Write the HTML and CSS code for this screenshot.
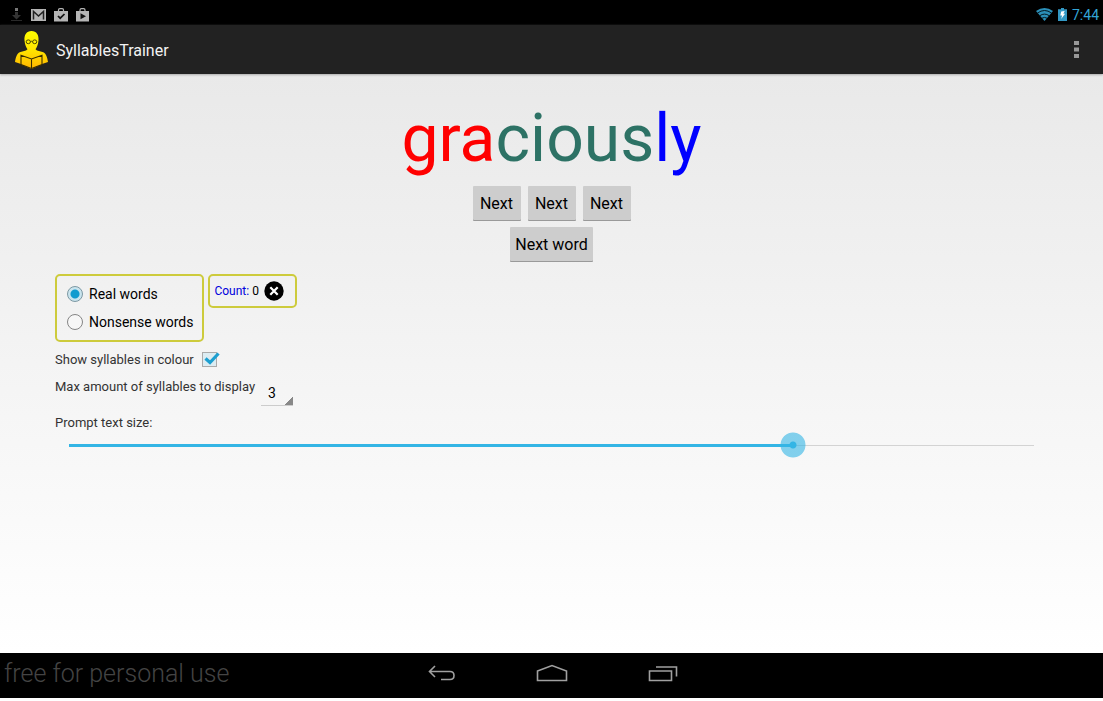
FILE: index.html
```html
<!DOCTYPE html>
<html lang="en">
<head>
<meta charset="utf-8">
<meta name="viewport" content="width=device-width, initial-scale=1">
<title>SyllablesTrainer</title>
<link rel="stylesheet" href="styles.css">
</head>
<body>
<div class="status-bar">
  <div class="notifications">
    <svg width="12" height="14" viewBox="0 0 12 14"><path d="M4 0h3v3H4z" fill="#777"/><path d="M4 4h3v3h3l-4.500 4.500L1 7h3z" fill="#333"/><path d="M0 12h11v1H0z" fill="#292929"/></svg>
    <svg width="15" height="12" viewBox="0 0 15 12"><path d="M0 0h15v12H0z" fill="#b5b5b5"/><path d="M2.500 10.500V2.500l5 4.500 5-4.500v8" fill="none" stroke="#222" stroke-width="1.500"/></svg>
    <svg width="14" height="14" viewBox="0 0 14 14"><path d="M0 3h14v10.500H0z" fill="#b5b5b5"/><path d="M4.500 3V2q0-1.400 1.400-1.400h2.200q1.400 0 1.400 1.400v1" fill="none" stroke="#b5b5b5" stroke-width="1.200"/><path d="M4 8l2.200 2.200L10.500 6" fill="none" stroke="#111" stroke-width="1.700"/></svg>
    <svg width="14" height="14" viewBox="0 0 14 14"><path d="M0 3h13v10.500H0z" fill="#b5b5b5"/><path d="M4 3V2q0-1.400 1.400-1.400h2.200Q9 .6 9 2v1" fill="none" stroke="#b5b5b5" stroke-width="1.200"/><path d="M4.500 5.200L10 8.300l-5.500 3z" fill="#111"/></svg>
  </div>
  <div class="system">
    <svg class="wifi" width="17" height="13" viewBox="0 0 17 13"><path d="M0 3Q8.500-3 17 3L8.500 13z" fill="#2b8fb8"/><path d="M1.500 5Q8.500 0 15.500 5M3.800 7.700q4.700-3.200 9.400 0M6 10.200q2.500-1.600 5 0" fill="none" stroke="#031820" stroke-width="1"/></svg>
    <svg class="battery" width="9" height="13" viewBox="0 0 9 13"><path d="M3 0h3v1.200h3V13H0V1.200h3z" fill="#3398c4"/><path d="M3.200 3.500L6.700 3 5.400 5.800h1.700L3.200 11l.9-3.600H2.300z" fill="#fff"/></svg>
    <time>7:44</time>
  </div>
</div>

<header class="action-bar">
  <svg class="app-icon" width="33" height="38" viewBox="0 0 33 38">
    <defs><linearGradient id="gold" x1="0" y1="0" x2="0" y2="38" gradientUnits="userSpaceOnUse"><stop offset="0" stop-color="#ffff00"/><stop offset=".5" stop-color="#ffe500"/><stop offset="1" stop-color="#ffb400"/></linearGradient></defs>
    <path d="M16.500 0C21.500 0 24 4 23.500 9.500 23.200 14 21.500 17 20.500 18.200L22 19.500l5.500 1.500C31.500 22 32.500 28 33 31l-6 2v.5L16.500 38 6 33.500V33l-6-2c.5-3 1.500-9 5.500-10l5.500-1.500 1.500-1.300C11.500 17 9.800 14 9.500 9.500 9 4 11.500 0 16.500 0z" fill="url(#gold)"/>
    <path d="M6 24.200l10.500 3.800L27 24.200v9.300L16.500 37.500 6 33.500zM16.500 28v10" fill="none" stroke="#382c00" stroke-width="1.100"/>
    <g fill="none" stroke="#4a4500"><ellipse cx="13.300" cy="10.800" rx="2.100" ry="1.900"/><ellipse cx="19.700" cy="10.800" rx="2.100" ry="1.900"/><path d="M15.400 10.600q1.100-.7 2.200 0"/></g>
  </svg>
  <h1 class="app-title">SyllablesTrainer</h1>
  <button class="overflow" type="button" aria-label="More options">
    <svg width="5" height="18" viewBox="0 0 5 18"><path d="M0 0h5v4H0zM0 6.500h5v4H0zM0 13h5v4H0z" fill="#999"/></svg>
  </button>
</header>

<main class="content">
  <p class="prompt"><span class="first">gra</span><span class="second">cious</span><span class="third">ly</span></p>
  <div class="actions">
    <div class="button-row">
      <button class="btn" type="button">Next</button>
      <button class="btn" type="button">Next</button>
      <button class="btn" type="button">Next</button>
    </div>
    <button class="btn btn-word" type="button">Next word</button>
  </div>

  <div class="panels">
    <div class="panel word-type" role="radiogroup" aria-label="Word type">
      <label class="option"><input class="radio" type="radio" name="type" checked>Real words</label>
      <label class="option"><input class="radio" type="radio" name="type">Nonsense words</label>
    </div>
    <div class="panel counter">
      <span><span class="count-label">Count:</span> 0</span>
      <button class="reset" type="button" aria-label="Reset count">
        <svg width="20" height="20" viewBox="0 0 20 20"><circle cx="10" cy="10" r="9.700" fill="#000"/><path d="M6.300 6.300l7.400 7.400M13.700 6.300l-7.400 7.400" stroke="#fff" stroke-width="2.200"/></svg>
      </button>
    </div>
  </div>

  <div class="setting colour-setting">
    <label for="colour">Show syllables in colour</label>
    <span class="check-wrap"><input class="check" type="checkbox" id="colour" checked><svg class="tick" width="18" height="14" viewBox="0 0 18 14"><path d="M2.500 6.500l4.500 4L15.500 1.500" fill="none" stroke="#1c9fd0" stroke-width="3.200"/></svg></span>
  </div>
  <div class="setting max-setting">
    <label for="max">Max amount of syllables to display</label>
    <select class="spinner" id="max"><option>2</option><option selected>3</option><option>4</option></select>
  </div>
  <label class="size-label" for="size">Prompt text size:</label>
  <input class="slider" type="range" id="size" min="0" max="100" value="75">
</main>

<nav class="nav-bar" aria-label="System">
  <span class="watermark">free for personal use</span>
  <div class="nav-buttons">
    <button class="nav-btn" type="button" aria-label="Back"><svg width="32" height="20" viewBox="0 0 32 20"><path d="M10 2L4.500 7.500l5.500 5.500M4.500 7.500H25q4 0 4 4t-4 4H16" fill="none" stroke="#a0a0a0" stroke-width="1.600"/></svg></button>
    <button class="nav-btn" type="button" aria-label="Home"><svg width="32" height="20" viewBox="0 0 32 20"><path d="M1.500 7L16 1.500 30.500 7v9.500h-29z" fill="none" stroke="#a0a0a0" stroke-width="1.600"/></svg></button>
    <button class="nav-btn" type="button" aria-label="Recent apps"><svg width="32" height="20" viewBox="0 0 32 20"><path d="M2.500 7h22v9.500h-22zM9 3h20.500v9.500" fill="none" stroke="#a0a0a0" stroke-width="1.600"/></svg></button>
  </div>
</nav>
</body>
</html>
```

FILE: styles.css
```css
* {
  box-sizing: border-box;
}

body {
  margin: 0;
  padding-bottom: 3px;
  min-height: 100vh;
  display: flex;
  flex-direction: column;
  font-family: Roboto, "Open Sans", sans-serif;
  font-size: 14px;
  color: #333;
  background: #fff;
}

button,
select {
  font: inherit;
  color: inherit;
}

svg {
  display: block;
}

.status-bar {
  display: flex;
  justify-content: space-between;
  align-items: center;
  height: 25px;
  padding: 4px 4px 0 11px;
  background: #000;
}

.notifications {
  display: flex;
  align-items: center;
  gap: 8px;
}

.system {
  display: flex;
  align-items: center;
  gap: 5px;
  color: #33a5d6;
}

.action-bar {
  position: relative;
  display: flex;
  align-items: center;
  height: 49px;
  padding: 0 16px 0 15px;
  background: #222;
  box-shadow: 0 1px 2px #aaa;
}

.app-title {
  margin: 0 auto 0 8px;
  padding-top: 2px;
  font-size: 16px;
  font-weight: 400;
  color: #f3f3f3;
}

.overflow {
  padding: 8px;
  border: 0;
  background: none;
}

.content {
  flex: 1;
  display: flex;
  flex-direction: column;
  padding: 25px 55px;
  background: linear-gradient(#e9e9e9, #fff);
}

.prompt {
  margin: 0;
  font-size: 66px;
  line-height: 80px;
  text-align: center;
}

.first {
  color: #f00;
}

.second {
  color: #2d7265;
}

.third {
  color: #00f;
}

.actions {
  display: flex;
  flex-direction: column;
  align-items: center;
  gap: 7px;
  margin-top: 7px;
}

.button-row {
  display: flex;
  gap: 7px;
}

.btn {
  height: 34px;
  min-width: 48px;
  padding: 0 5px;
  border: 0;
  border-radius: 1px;
  font-size: 16px;
  color: #000;
  background: #cdcdcd;
  box-shadow: 0 1px 0 #999;
}

.panels {
  display: flex;
  align-items: flex-start;
  gap: 4px;
  margin-top: 13px;
}

.panel {
  border: 2px solid #cdcb3c;
  border-radius: 5px;
  color: #000;
}

.word-type {
  padding: 4px 9px 4px 10px;
}

.option {
  display: flex;
  align-items: center;
  gap: 6px;
  height: 28px;
}

.radio {
  appearance: none;
  width: 16px;
  height: 16px;
  margin: 0;
  border: 1px solid #858585;
  border-radius: 50%;
  background: #f7f7f7;
}

.radio:checked {
  border-color: #7c98a3;
  background: radial-gradient(circle, #119bcf 4px, #c9e4ee 5px);
}

.counter {
  display: flex;
  align-items: center;
  gap: 5px;
  height: 34px;
  padding: 0 11px 0 4px;
  font-size: 12px;
}

.count-label {
  color: #00d;
}

.reset {
  padding: 0;
  border: 0;
  background: none;
}

.setting,
.size-label {
  font-size: 13px;
}

.setting {
  display: flex;
}

.colour-setting {
  align-items: center;
  gap: 8px;
  height: 28px;
  margin-top: 3px;
}

.check-wrap {
  position: relative;
  display: flex;
}

.check {
  appearance: none;
  width: 15px;
  height: 15px;
  margin: 0;
  border: 1px solid #aaa;
  background: #dcecf2;
}

.tick {
  position: absolute;
  left: 1px;
  top: 0;
  pointer-events: none;
}

.max-setting {
  gap: 6px;
  line-height: 28px;
}

.spinner {
  appearance: none;
  width: 32px;
  height: 24px;
  margin-top: 9px;
  padding: 0 0 0 7px;
  border: 0;
  border-bottom: 1px solid #ccc;
  border-radius: 0;
  font-size: 14px;
  line-height: 23px;
  color: #000;
  background: linear-gradient(135deg, transparent 50%, #888 50%) right bottom / 10px 10px no-repeat;
  background-origin: border-box;
}

.size-label {
  margin-top: 5px;
  line-height: 24px;
}

.slider {
  appearance: none;
  width: 100%;
  height: 26px;
  margin: -3px 0 0;
  background:
    linear-gradient(#33b5e5, #33b5e5) 14px center / calc(75% - 21px) 3px no-repeat,
    linear-gradient(#d3d3d3, #d3d3d3) center / calc(100% - 28px) 1px no-repeat;
}

.slider::-webkit-slider-thumb {
  appearance: none;
  width: 26px;
  height: 26px;
  border: 0;
  border-radius: 50%;
  background: radial-gradient(circle, #33b5e5 3px, rgba(51, 181, 229, 0.6) 4px 12px, transparent 13px);
}

.nav-bar {
  display: grid;
  grid-template-columns: 1fr auto 1fr;
  align-items: center;
  height: 45px;
  padding: 0 4px 3px;
  background: #000;
}

.watermark {
  font-family: Roboto, sans-serif;
  font-size: 25px;
  font-weight: 300;
  line-height: 40px;
  white-space: nowrap;
  color: #444;
}

.nav-buttons {
  display: flex;
  gap: 79px;
}

.nav-btn {
  padding: 0;
  border: 0;
  background: none;
}
```
